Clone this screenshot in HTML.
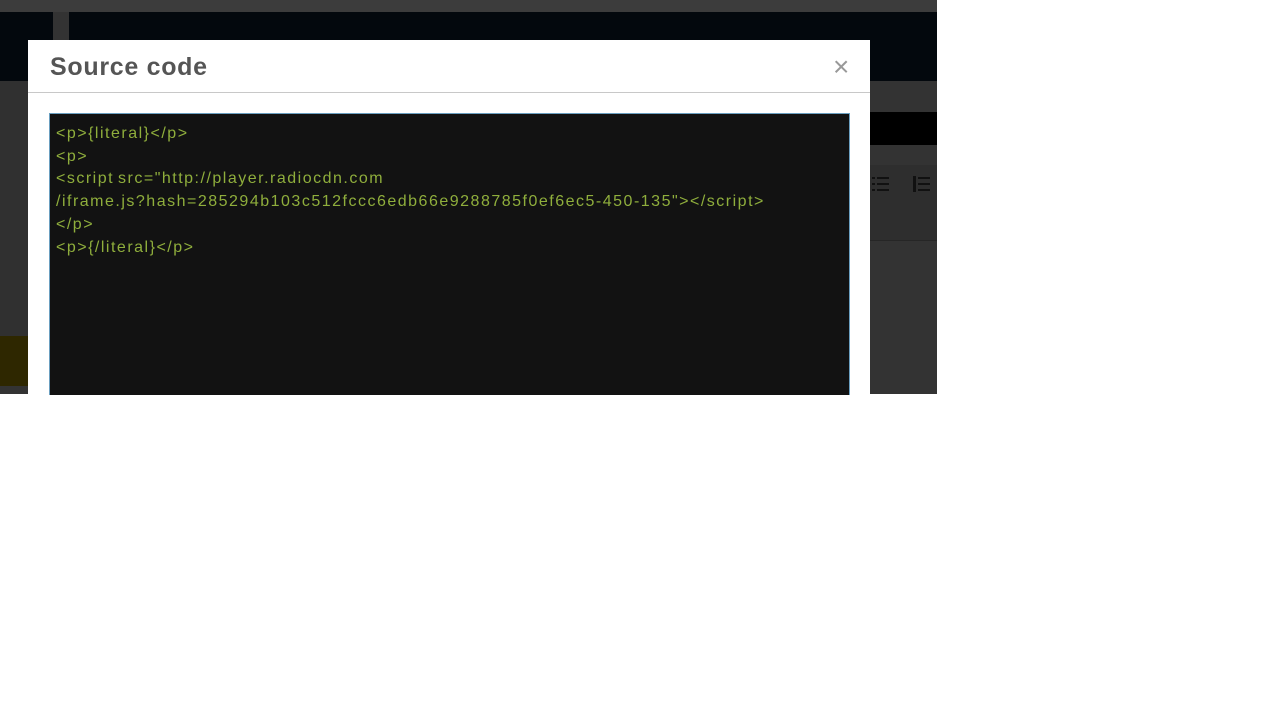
<!DOCTYPE html>
<html><head><style>
body{margin:0;width:1280px;height:720px;background:#fff;position:relative;overflow:hidden;font-family:"Liberation Sans",sans-serif}
.a{position:absolute}
</style></head><body>
<div class="a" style="left:0;top:0;width:937px;height:394px;background:#333"></div>
<div class="a" style="left:0;top:0;width:937px;height:12px;background:#3c3c3c"></div>
<div class="a" style="left:0;top:12px;width:53px;height:69px;background:#03080d"></div>
<div class="a" style="left:69px;top:12px;width:868px;height:69px;background:#03080d"></div>
<div class="a" style="left:0;top:81px;width:28px;height:255px;background:#303030"></div>
<div class="a" style="left:0;top:336px;width:28px;height:50px;background:#2e2700"></div>
<div class="a" style="left:870px;top:112px;width:67px;height:33px;background:#000"></div>
<div class="a" style="left:870px;top:165px;width:67px;height:75px;background:#2e2e2e;border-bottom:1px solid #262626"></div>
<svg class="a" style="left:870px;top:175px" width="67" height="20"><g fill="#111"><rect x="2" y="2" width="3" height="2"/><rect x="7" y="2" width="12" height="2"/><rect x="2" y="8" width="3" height="2"/><rect x="7" y="8" width="12" height="2"/><rect x="2" y="14" width="3" height="2"/><rect x="7" y="14" width="12" height="2"/><rect x="43" y="1" width="3" height="16"/><rect x="48" y="2" width="12" height="2"/><rect x="48" y="8" width="12" height="2"/><rect x="48" y="14" width="12" height="2"/></g></svg>
<div class="a" style="left:28px;top:40px;width:842px;height:354px;background:#fff"></div>
<div class="a" style="left:28px;top:92px;width:842px;height:1px;background:#c8c8c8"></div>
<div class="a" style="left:50px;top:52px;font-size:25px;font-weight:bold;color:#555;line-height:30px;letter-spacing:0.7px">Source code</div>
<div class="a" style="left:833px;top:52px;font-size:28px;color:#999;line-height:30px">×</div>
<div class="a" style="left:49px;top:113px;width:799px;height:281px;background:#121212;border:1px solid #6a9fc0;border-bottom:none"></div>
<div class="a" style="left:56px;top:123px;font-size:16px;line-height:22.7px;color:#8fae3c;white-space:pre;letter-spacing:1.5px;word-spacing:-2px">&lt;p&gt;{literal}&lt;/p&gt;
&lt;p&gt;
&lt;script src="http://player.radiocdn.com
/iframe.js?hash=285294b103c512fccc6edb66e9288785f0ef6ec5-450-135"&gt;&lt;/script&gt;
&lt;/p&gt;
&lt;p&gt;{/literal}&lt;/p&gt;</div>
</body></html>
